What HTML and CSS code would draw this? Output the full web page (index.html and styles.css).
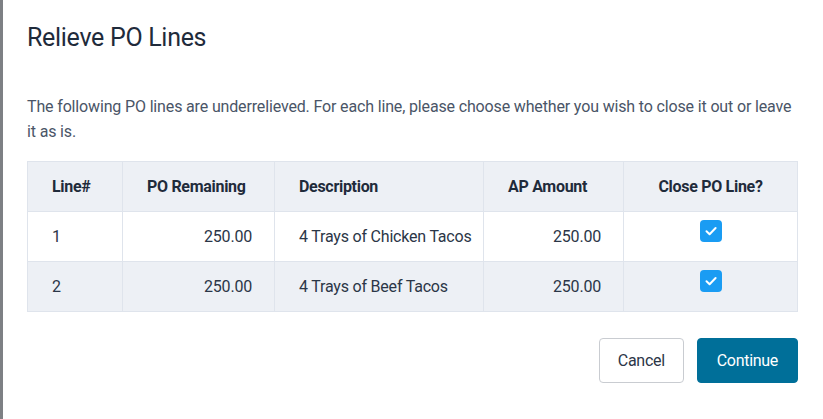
FILE: index.html
```html
<!DOCTYPE html>
<html>
<head>
<meta charset="utf-8">
<link rel="stylesheet" href="styles.css">
</head>
<body>
<div class="page">
  <div class="backdrop"></div>
  <div class="modal">
    <h1 class="title">Relieve PO Lines</h1>
    <p class="intro">The following PO lines are underrelieved. For each line, please choose whether you wish to close it out or leave it as is.</p>
    <table class="lines">
      <colgroup>
        <col class="w-line">
        <col class="w-rem">
        <col class="w-desc">
        <col class="w-ap">
        <col class="w-close">
      </colgroup>
      <thead>
        <tr>
          <th>Line#</th>
          <th>PO Remaining</th>
          <th>Description</th>
          <th>AP Amount</th>
          <th class="c-close">Close PO Line?</th>
        </tr>
      </thead>
      <tbody>
        <tr>
          <td>1</td>
          <td class="num">250.00</td>
          <td>4 Trays of Chicken Tacos</td>
          <td class="num">250.00</td>
          <td class="chk"><span class="box"><svg viewBox="0 0 22 22" width="22" height="22"><path d="M6.5 11.3 L9.6 14.2 L15.6 8" fill="none" stroke="#fff" stroke-width="2" stroke-linecap="round" stroke-linejoin="round"/></svg></span></td>
        </tr>
        <tr class="alt">
          <td>2</td>
          <td class="num">250.00</td>
          <td>4 Trays of Beef Tacos</td>
          <td class="num">250.00</td>
          <td class="chk"><span class="box"><svg viewBox="0 0 22 22" width="22" height="22"><path d="M6.5 11.3 L9.6 14.2 L15.6 8" fill="none" stroke="#fff" stroke-width="2" stroke-linecap="round" stroke-linejoin="round"/></svg></span></td>
        </tr>
      </tbody>
    </table>
    <div class="actions">
      <button class="btn btn-cancel">Cancel</button>
      <button class="btn btn-primary">Continue</button>
    </div>
  </div>
</div>
</body>
</html>
```
FILE: styles.css
```css
html, body {
  margin: 0;
  padding: 0;
  height: 100%;
  background: #fff;
}
body {
  font-family: Roboto, "Liberation Sans", sans-serif;
}
.page {
  display: flex;
  height: 419px;
  overflow: hidden;
}
.backdrop {
  width: 3px;
  flex: none;
  background: #7d8084;
}
.modal {
  flex: 1;
  background: #fff;
  padding: 23px 25px 0 24px;
}
.title {
  margin: 0;
  font-size: 25px;
  line-height: 30px;
  font-weight: 400;
  letter-spacing: -0.3px;
  color: #1f2b3b;
}
.intro {
  margin: 41px 0 0;
  font-size: 16px;
  line-height: 25px;
  letter-spacing: -0.15px;
  color: #4a5567;
}
.lines {
  margin-top: 17px;
  width: 770px;
  table-layout: fixed;
  border-collapse: collapse;
  font-size: 16px;
  letter-spacing: -0.2px;
  color: #2b3647;
}
.w-line { width: 95px; }
.w-rem { width: 152px; }
.w-desc { width: 209px; }
.w-ap { width: 140px; }
.w-close { width: 174px; }
.lines th, .lines td {
  height: 49px;
  padding: 0 22px 0 24px;
  border: 1px solid #dfe4ec;
  text-align: left;
  white-space: nowrap;
}
.lines th {
  background: #edf0f5;
  font-weight: 700;
  letter-spacing: -0.3px;
  color: #1f2b3b;
}
.lines tr.alt td {
  background: #edf0f5;
}
.lines th.c-close { text-align: center; padding: 0; }
.lines td.num { text-align: right; }
.lines td.chk { text-align: center; padding: 0; }
.box {
  display: inline-block;
  width: 22px;
  height: 22px;
  border-radius: 4px;
  background: #1a9cf3;
  vertical-align: -2px;
  position: relative;
  top: -5px;
}
.box svg { display: block; }
.actions {
  display: flex;
  justify-content: flex-end;
  gap: 13px;
  margin-top: 26px;
}
.btn {
  height: 45px;
  border-radius: 4px;
  font-family: Roboto, "Liberation Sans", sans-serif;
  font-size: 16px;
  letter-spacing: -0.3px;
  cursor: pointer;
}
.btn-cancel {
  padding: 0 18px;
  background: #fff;
  border: 1px solid #c9ccd1;
  color: #2b3647;
}
.btn-primary {
  padding: 0 19px;
  background: #006f99;
  border: 1px solid #006f99;
  color: #fff;
}
```
